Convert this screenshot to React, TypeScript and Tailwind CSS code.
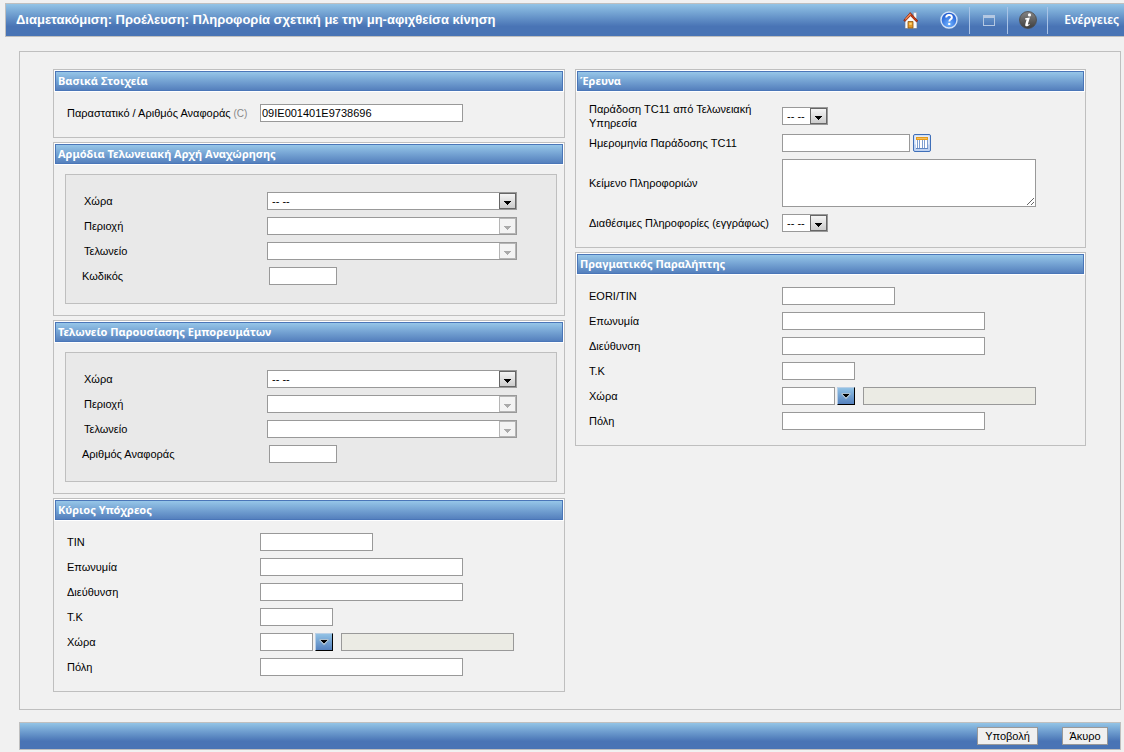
import { useId } from 'react';
import type { ReactNode } from 'react';

const fieldBase = 'h-[18px] border border-[#999999] bg-white px-px text-[11px] leading-[16px] text-black';

function Panel({ title, children }: { title: string; children: ReactNode }) {
  return (
    <section className="border border-[#bfbfbf]">
      <h2 className="m-px h-5 border border-[#4a76b8] bg-linear-to-b from-[#96c6e8] to-[#5580bd] px-0.5 font-['Noto_Sans',sans-serif] text-[11px] leading-[18px] font-bold text-white ring-1 ring-white">
        {title}
      </h2>
      {children}
    </section>
  );
}

function Rows({ children }: { children: ReactNode }) {
  return <div className="flex flex-col gap-[7px] px-[13px] pt-3 pb-[15px]">{children}</div>;
}

type RowProps = {
  label: string;
  hint?: string;
  labelWidth?: string;
  rowHeight?: string;
  children: (id: string) => ReactNode;
};

function Row({ label, hint, labelWidth = 'w-[193px]', rowHeight = 'min-h-[18px]', children }: RowProps) {
  const id = useId();
  return (
    <div className={`flex items-center ${rowHeight}`}>
      <label htmlFor={id} className={`shrink-0 pr-2 leading-[14px] ${labelWidth}`}>
        {label}
        {hint && <span className="text-[10px] text-[#888888]"> {hint}</span>}
      </label>
      {children(id)}
    </div>
  );
}

function TextRow({ label, hint, width, value, labelWidth }: { label: string; hint?: string; width: string; value?: string; labelWidth?: string }) {
  return (
    <Row label={label} hint={hint} labelWidth={labelWidth}>
      {(id) => <input id={id} type="text" defaultValue={value} className={`${fieldBase} ${width}`} />}
    </Row>
  );
}

function Select({ id, width, disabled = false }: { id: string; width: string; disabled?: boolean }) {
  return (
    <span className={`relative flex ${width}`}>
      <select id={id} disabled={disabled} className={`${fieldBase} w-full appearance-none pl-1`}>
        <option>{disabled ? '' : '-- --'}</option>
      </select>
      <span
        className={`pointer-events-none absolute top-px right-px flex h-4 w-[17px] items-center justify-center border ${
          disabled ? 'border-[#b5b5b5] bg-[#f3f3f3] text-[#aaaaaa]' : 'border-[#666666] bg-linear-to-b from-[#f4f4f4] to-[#cccccc] text-black'
        }`}
      >
        <svg width="7" height="4" viewBox="0 0 7 4" className="mt-1" shapeRendering="crispEdges" fill="currentColor">
          <path d="M0 0h7v1H6v1H5v1H4v1H3V3H2V2H1V1H0z" />
        </svg>
      </span>
    </span>
  );
}

function CountryRow() {
  return (
    <Row label="Χώρα">
      {(id) => (
        <>
          <input id={id} type="text" className={`${fieldBase} w-[53px]`} />
          <button
            type="button"
            aria-label="Επιλογή χώρας"
            className="ml-0.5 flex size-[18px] items-center justify-center border border-t-[#b9cfe6] border-r-black border-b-black border-l-[#b9cfe6] bg-linear-to-b from-[#92c2e5] to-[#5581be]"
          >
            <svg width="10" height="8" viewBox="0 0 10 8">
              <path d="M0.5 1h9v1.5L5 7.5 0.5 2.5z" fill="#b8c4cc" opacity=".8" />
              <path d="M2 2h6v1H7v1H6v1H4V4H3V3H2z" fill="#000" shapeRendering="crispEdges" />
            </svg>
          </button>
          <input type="text" readOnly aria-label="Όνομα χώρας" className="ml-2 h-[18px] w-[173px] border border-[#999999] bg-[#ebebe4]" />
        </>
      )}
    </Row>
  );
}

function OfficePanel({ title, codeLabel }: { title: string; codeLabel: string }) {
  return (
    <Panel title={title}>
      <div className="mt-2.5 mr-[7px] mb-[11px] ml-[11px] flex flex-col gap-[7px] border border-[#bfbfbf] bg-[#e9e9e9] pt-[17px] pb-[18px]">
        <div className="flex flex-col gap-[7px] pl-[18px]">
          <Row label="Χώρα" labelWidth="w-[183px]">
            {(id) => <Select id={id} width="w-[250px]" />}
          </Row>
          <Row label="Περιοχή" labelWidth="w-[183px]">
            {(id) => <Select id={id} width="w-[250px]" disabled />}
          </Row>
          <Row label="Τελωνείο" labelWidth="w-[183px]">
            {(id) => <Select id={id} width="w-[250px]" disabled />}
          </Row>
        </div>
        <div className="pl-4">
          <TextRow label={codeLabel} width="w-[68px]" labelWidth="w-[187px]" />
        </div>
      </div>
    </Panel>
  );
}

function HomeIcon() {
  return (
    <svg width="16" height="18" viewBox="0 0 16 18">
      <path d="M10.5 1.5h3v6h-3z" fill="#f4f6f8" stroke="#9aa5b5" strokeWidth=".6" />
      <path d="M2 9.5 7.5 4l6.5 6v7.5H2z" fill="#fbfbfb" stroke="#6c7a90" strokeWidth=".7" />
      <path d="M0.8 9.2 7.2 1.6l7.6 8.2-1.3 1.1-6-6.2-5.6 5.8z" fill="#c93a12" stroke="#7c1c06" strokeWidth=".7" />
      <path d="M2 8 7 2.3l1 1.1-5.2 5.4z" fill="#f08a55" />
      <path d="M5 10.5h5V17H5z" fill="#e49a28" stroke="#8d5510" strokeWidth=".8" />
      <path d="M6.3 11.8h2.4v2H6.3z" fill="#ffd878" />
    </svg>
  );
}

function HelpIcon() {
  return (
    <svg width="18" height="18" viewBox="0 0 18 18">
      <defs>
        <radialGradient id="help-fill" cx=".5" cy=".75" r=".7">
          <stop offset="0" stopColor="#6fb2ff" />
          <stop offset="1" stopColor="#1c57cf" />
        </radialGradient>
      </defs>
      <circle cx="9" cy="9" r="8" fill="url(#help-fill)" stroke="#d4e4f8" strokeWidth="1.4" />
      <path d="M6.2 6.6c0-1.7 1.2-2.6 2.8-2.6s2.9.9 2.9 2.4c0 2-2.6 1.9-2.6 4.1" fill="none" stroke="#fff" strokeWidth="1.9" />
      <path d="M8.2 11.9h2.1V14H8.2z" fill="#fff" />
    </svg>
  );
}

function WindowIcon() {
  return (
    <svg width="12" height="12" viewBox="0 0 12 12" shapeRendering="crispEdges">
      <path d="M.5 1.5h11v10H.5z" fill="none" stroke="#b4c8e2" />
      <path d="M0 1h12v3H0z" fill="#b4c8e2" />
    </svg>
  );
}

function InfoIcon() {
  return (
    <svg width="18" height="18" viewBox="0 0 18 18">
      <defs>
        <linearGradient id="info-fill" x1="0" y1="0" x2="0" y2="1">
          <stop offset="0" stopColor="#858585" />
          <stop offset="1" stopColor="#3c3c3c" />
        </linearGradient>
      </defs>
      <circle cx="9" cy="9" r="8.5" fill="url(#info-fill)" stroke="#4b4b4b" strokeWidth=".8" />
      <circle cx="10.5" cy="3.9" r="1.6" fill="#fff" />
      <path d="M6.2 7.2 10.9 6.6 8.9 13c-.2.8.4.8 1.5 0l.4.5c-1.8 2.4-5.3 2.6-4.5-.3L7.6 8.4H6z" fill="#fff" />
    </svg>
  );
}

function CalendarIcon() {
  return (
    <svg width="18" height="18" viewBox="0 0 18 18">
      <rect x=".5" y=".5" width="17" height="17" rx="1.5" fill="#bed2f1" stroke="#3f6fb8" />
      <path d="M1.5 1.5h15v9h-15z" fill="#e2ecfb" />
      <g shapeRendering="crispEdges">
        <path d="M3 6h12v9H3z" fill="#fff" />
        <path d="M3 3h12v3H3z" fill="#e59b1c" />
        <path d="M4 4h10v1H4z" fill="#f3c05c" />
        <path d="M4 6h1v8H4zM6 6h1v8H6zM9 6h1v8H9zM11 6h1v8h-1zM14 6h1v8h-1z" fill="#7f9fd0" />
        <path d="M3 14h12v1H3z" fill="#5f86c4" />
      </g>
    </svg>
  );
}

const barGradient = 'border border-[#bfbfbf] bg-linear-to-b from-[#93c4e6] to-[#4974b5] to-70%';
const toolButton = 'flex h-[27px] items-center justify-center';
const actionButton = 'h-[18px] border border-[#999999] bg-[#f0f0f0] text-[11px] leading-[16px] text-black';

export default function App() {
  return (
    <div className="min-h-screen bg-[#f1f1f1] pt-[3px] pb-0.5 font-['Liberation_Sans',sans-serif] text-[11px] text-black">
      {/* Title bar */}
      <header className={`ml-[5px] flex h-[34px] items-center justify-between border-r-0 pr-[5px] pl-2.5 text-white ${barGradient}`}>
        <h1 className="text-[13px] leading-4 font-bold">
          Διαμετακόμιση: Προέλευση: Πληροφορία σχετική με την μη-αφιχθείσα κίνηση
        </h1>
        <nav className="flex items-center">
          <button type="button" aria-label="Αρχική" className={`${toolButton} w-[37px]`}>
            <HomeIcon />
          </button>
          <button type="button" aria-label="Βοήθεια" className={`${toolButton} w-10`}>
            <HelpIcon />
          </button>
          <button type="button" aria-label="Παράθυρο" className={`${toolButton} w-[38px] border-l border-[#a9c3e6]`}>
            <WindowIcon />
          </button>
          <button type="button" aria-label="Πληροφορίες" className={`${toolButton} w-10 border-l border-[#a9c3e6]`}>
            <InfoIcon />
          </button>
          <a href="#actions" className={`${toolButton} border-l border-[#a9c3e6] pl-4 font-['Noto_Sans',sans-serif] text-[12px] font-semibold`}>
            Ενέργειες
          </a>
        </nav>
      </header>

      <form className="mt-3.5 mr-[3px] ml-[19px]">
        <div className="grid grid-cols-[512fr_511fr] items-start gap-2.5 border border-[#bfbfbf] py-[17px] pr-[34px] pl-[33px]">
          <div className="flex flex-col gap-1">
            <Panel title="Βασικά Στοιχεία">
              <Rows>
                <TextRow label="Παραστατικό / Αριθμός Αναφοράς" hint="(C)" width="w-[203px]" value="09IE001401E9738696" />
              </Rows>
            </Panel>
            <OfficePanel title="Αρμόδια Τελωνειακή Αρχή Αναχώρησης" codeLabel="Κωδικός" />
            <OfficePanel title="Τελωνείο Παρουσίασης Εμπορευμάτων" codeLabel="Αριθμός Αναφοράς" />
            <Panel title="Κύριος Υπόχρεος">
              <Rows>
                <TextRow label="ΤΙΝ" width="w-[113px]" />
                <TextRow label="Επωνυμία" width="w-[203px]" />
                <TextRow label="Διεύθυνση" width="w-[203px]" />
                <TextRow label="Τ.Κ" width="w-[73px]" />
                <CountryRow />
                <TextRow label="Πόλη" width="w-[203px]" />
              </Rows>
            </Panel>
          </div>

          <div className="flex flex-col gap-1">
            <Panel title="Έρευνα">
              <Rows>
                <Row label="Παράδοση TC11 από Τελωνειακή Υπηρεσία" rowHeight="h-[23px]">
                  {(id) => <Select id={id} width="w-[46px]" />}
                </Row>
                <Row label="Ημερομηνία Παράδοσης TC11">
                  {(id) => (
                    <>
                      <input id={id} type="text" className={`${fieldBase} w-32`} />
                      <button type="button" aria-label="Ημερολόγιο" className="ml-[3px]">
                        <CalendarIcon />
                      </button>
                    </>
                  )}
                </Row>
                <Row label="Κείμενο Πληροφοριών">
                  {(id) => <textarea id={id} className="block h-12 w-[254px] resize border border-[#999999] bg-white" />}
                </Row>
                <Row label="Διαθέσιμες Πληροφορίες (εγγράφως)">
                  {(id) => <Select id={id} width="w-[46px]" />}
                </Row>
              </Rows>
            </Panel>
            <Panel title="Πραγματικός Παραλήπτης">
              <Rows>
                <TextRow label="EORI/TIN" width="w-[113px]" />
                <TextRow label="Επωνυμία" width="w-[203px]" />
                <TextRow label="Διεύθυνση" width="w-[203px]" />
                <TextRow label="Τ.Κ" width="w-[73px]" />
                <CountryRow />
                <TextRow label="Πόλη" width="w-[203px]" />
              </Rows>
            </Panel>
          </div>
        </div>

        {/* Form actions */}
        <footer className={`mt-3 flex h-7 items-center justify-end gap-6 pr-3 ${barGradient}`}>
          <button type="submit" className={`${actionButton} w-[61px]`}>
            Υποβολή
          </button>
          <button type="button" className={`${actionButton} w-[46px]`}>
            Άκυρο
          </button>
        </footer>
      </form>
    </div>
  );
}
